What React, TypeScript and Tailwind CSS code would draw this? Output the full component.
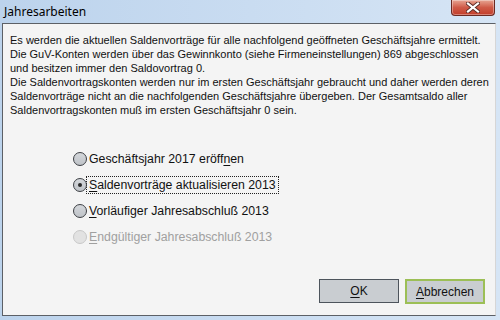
import React from 'react';

const options = [
  { pre: 'Geschäftsjahr 2017 eröff', key: 'n', post: 'en', checked: false, disabled: false },
  { pre: '', key: 'S', post: 'aldenvorträge aktualisieren 2013', checked: true, disabled: false },
  { pre: '', key: 'V', post: 'orläufiger Jahresabschluß 2013', checked: false, disabled: false },
  { pre: '', key: 'E', post: 'ndgültiger Jahresabschluß 2013', checked: false, disabled: true },
];

function Radio({ checked, disabled }: { checked: boolean; disabled: boolean }) {
  return (
    <span
      className={`relative flex h-[14px] w-[14px] shrink-0 items-center justify-center rounded-full border ${
        disabled ? 'border-[#c8c8c8] bg-[#e2e2e2]' : 'border-[#3c3f44] bg-gradient-to-b from-[#d4d7db] to-[#bfc3c8]'
      }`}
    >
      {checked && <span className="h-[4px] w-[4px] rounded-full bg-[#2a2a2a]" />}
    </span>
  );
}

export default function App() {
  return (
    <div className="flex h-[320px] w-[500px] flex-col bg-gradient-to-r from-[#bcd3ec] via-[#c9dcf1] to-[#d6e5f5] font-['Liberation_Sans',Arial,sans-serif]">
      {/* title bar */}
      <div className="relative flex h-[23px] shrink-0 items-center pl-[4px]">
        <span className="font-['Noto_Sans',sans-serif] text-[12px] text-black">Jahresarbeiten</span>
        <div className="absolute right-[5px] top-0 flex h-[16px] w-[44px] items-center justify-center rounded-b-[4px] border border-t-0 border-[#6b2a22] bg-gradient-to-b from-[#e6a493] via-[#cf5a47] to-[#c23d2a] shadow-[inset_0_0_0_1px_rgba(255,255,255,0.35)]">
          <svg width="14" height="11" viewBox="0 0 14 11">
            <path d="M2 1.5 L12 9.5 M12 1.5 L2 9.5" stroke="#5a2a24" strokeWidth="4" strokeLinecap="square" />
            <path d="M2 1.5 L12 9.5 M12 1.5 L2 9.5" stroke="#ffffff" strokeWidth="2.2" strokeLinecap="square" />
          </svg>
        </div>
      </div>

      {/* client area */}
      <div className="mb-[4px] ml-[2px] mr-[4px] flex flex-1 flex-col border border-[#5c6066] border-r-[#d6d6d6] bg-[#f4f4f4]">
        <div className="whitespace-nowrap px-[7px] pt-[9px] text-[11px] leading-[14px] text-[#111]">
          <p>Es werden die aktuellen Saldenvorträge für alle nachfolgend geöffneten Geschäftsjahre ermittelt.</p>
          <p>Die GuV-Konten werden über das Gewinnkonto (siehe Firmeneinstellungen) 869 abgeschlossen</p>
          <p>und besitzen immer den Saldovortrag 0.</p>
          <p>Die Saldenvortragskonten werden nur im ersten Geschäftsjahr gebraucht und daher werden deren</p>
          <p>Saldenvorträge nicht an die nachfolgenden Geschäftsjahre übergeben. Der Gesamtsaldo aller</p>
          <p>Saldenvortragskonten muß im ersten Geschäftsjahr 0 sein.</p>
        </div>

        <div className="ml-[70px] mt-[34px] flex flex-col gap-[11px] text-[12.3px]">
          {options.map((o, i) => (
            <div key={i} className="flex h-[15px] items-center gap-[1px]">
              <Radio checked={o.checked} disabled={o.disabled} />
              <span
                className={`px-[1px] leading-[14px] ${o.disabled ? 'text-[#a0a0a0]' : 'text-[#111]'} ${
                  o.checked ? 'outline outline-1 outline-dotted outline-[#222] outline-offset-[1px]' : ''
                }`}
              >
                {o.pre}
                <span className="underline underline-offset-2">{o.key}</span>
                {o.post}
              </span>
            </div>
          ))}
        </div>

        <div className="mt-auto mb-[11px] mr-[10px] flex justify-end gap-[6px] text-[12px]">
          <button className="flex h-[24px] w-[80px] items-center justify-center border border-[#4d545c] bg-[#c9cdd1] text-[#111]">
            <span><span className="underline underline-offset-2">O</span>K</span>
          </button>
          <button className="flex h-[25px] w-[80px] items-center justify-center border-2 border-[#9cbf56] bg-[#c9cdd1] text-[#111]">
            <span><span className="underline underline-offset-2">A</span>bbrechen</span>
          </button>
        </div>
      </div>
    </div>
  );
}
